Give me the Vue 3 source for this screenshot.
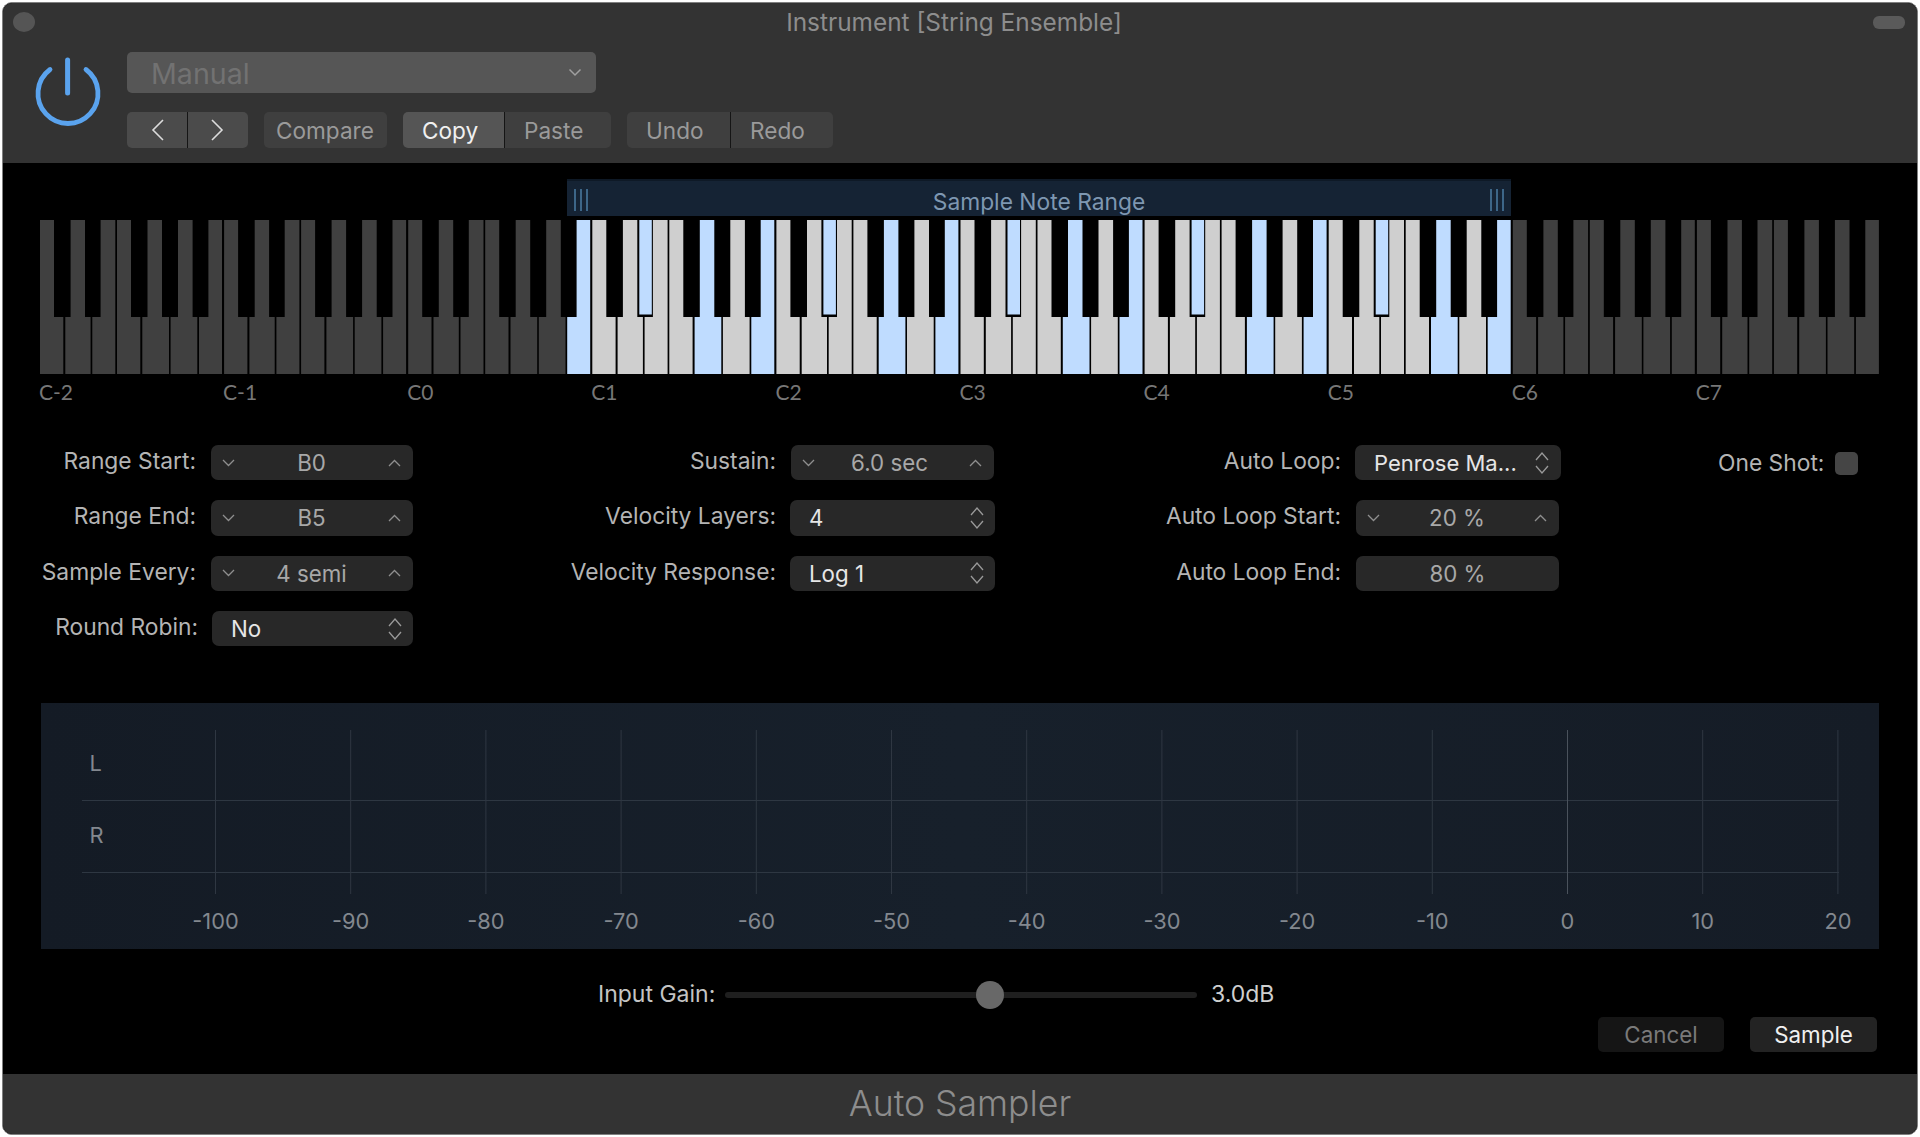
<script setup>
const OCT = 184.1
const bottoms = [[0,23.3],[25.3,50.6],[52.3,75.3],[77,100.3],[102.3,129],[130.6,157.3],[159,182]]
const tops = [[0,14],[30.6,45],[60.6,75.3],[77,91],[107.5,122],[138,152.6],[168.4,182]]
const whiteSemis = [0,2,4,5,7,9,11]
const blackX = { 3: 47, 8: 124.6, 1: 16.3, 6: 93.4, 10: 155 }
const TOP = 97, H = 154
const lo = 35, hi = 95
const sampled = n => n >= lo && n <= hi && (n - lo) % 4 === 0
const whites = []
const blues = []
for (let o = 0; o < 10; o++) {
  const x0 = o * OCT
  whiteSemis.forEach((s, i) => {
    const n = o * 12 + s
    const [a, b] = tops[i]
    const [c, d] = bottoms[i]
    const f = v => (x0 + v).toFixed(1)
    const inRange = n >= lo && n <= hi
    whites.push({
      d: `M${f(a)} 0H${f(b)}V${TOP}H${f(d)}V${H}H${f(c)}V${TOP}H${f(a)}Z`,
      fill: sampled(n) ? '#bfdcff' : inRange ? '#cfcfcf' : '#404040'
    })
  })
  ;[1,3,6,8,10].forEach(s => {
    const n = o * 12 + s
    if (sampled(n)) blues.push({ x: (x0 + blackX[s]).toFixed(1) })
  })
}
const octaves = ['C-2','C-1','C0','C1','C2','C3','C4','C5','C6','C7']
const ticks = [-100,-90,-80,-70,-60,-50,-40,-30,-20,-10,0,10,20].map((v, i) => ({ v, x: 174.5 + i * 135.2 }))
const col1 = [
  { label: 'Range Start:', kind: 'step', value: 'B0' },
  { label: 'Range End:', kind: 'step', value: 'B5' },
  { label: 'Sample Every:', kind: 'step', value: '4 semi' },
  { label: 'Round Robin:', kind: 'pop', value: 'No', cls: 'shift' }
]
const col2 = [
  { label: 'Sustain:', kind: 'step', value: '6.0 sec' },
  { label: 'Velocity Layers:', kind: 'pop', value: '4' },
  { label: 'Velocity Response:', kind: 'pop', value: 'Log 1' }
]
const col3 = [
  { label: 'Auto Loop:', kind: 'pop', value: 'Penrose Ma...' },
  { label: 'Auto Loop Start:', kind: 'step', value: '20 %' },
  { label: 'Auto Loop End:', kind: 'plain', value: '80 %' }
]
const columns = [
  { cls: 'c1', rows: col1 },
  { cls: 'c2', rows: col2 },
  { cls: 'c3', rows: col3 }
]
</script>

<template>
  <div class="window">
    <header class="head">
      <div class="titlebar">
        <span class="dot"></span>
        <span class="title">Instrument [String Ensemble]</span>
        <span class="pill"></span>
      </div>
      <div class="toolbar">
        <svg class="power" width="75" height="73" viewBox="30 55 75 73" fill="none" stroke="#5aa3ee" stroke-linecap="round">
          <path d="M50 69.5A30 30 0 1 0 86 69.5" stroke-width="4.8"/>
          <path d="M67.6 60V93" stroke-width="5"/>
        </svg>
        <div class="tools">
          <div class="preset">
            <span class="presettext">Manual</span>
            <svg width="14" height="9" viewBox="0 0 14 9" fill="none" stroke="#a0a0a0" stroke-width="1.5"><path d="M1.5 1.5L7 7L12.5 1.5"/></svg>
          </div>
          <div class="btnrow">
            <div class="group nav">
              <div class="seg navseg prev"><svg width="14" height="22" viewBox="0 0 14 22" fill="none" stroke="#dcdcdc" stroke-width="1.6"><path d="M12 1L2 11L12 21"/></svg></div>
              <div class="seg navseg next"><svg width="14" height="22" viewBox="0 0 14 22" fill="none" stroke="#dcdcdc" stroke-width="1.6"><path d="M2 1L12 11L2 21"/></svg></div>
            </div>
            <div class="group compare"><div class="seg">Compare</div></div>
            <div class="group copygroup">
              <div class="seg copy">Copy</div>
              <div class="seg paste">Paste</div>
            </div>
            <div class="group undogroup">
              <div class="seg undo">Undo</div>
              <div class="seg redo">Redo</div>
            </div>
          </div>
        </div>
      </div>
    </header>

    <main class="body">
      <div class="rangebar">
        <span class="grip"><i></i><i></i><i></i></span>
        <span class="rangetext">Sample Note Range</span>
        <span class="grip"><i></i><i></i><i></i></span>
      </div>
      <svg class="keys" width="1842" height="154" viewBox="0 0 1842 154">
        <path v-for="(k, i) in whites" :key="i" :d="k.d" :fill="k.fill"/>
        <rect v-for="(b, i) in blues" :key="'b' + i" :x="b.x" y="0" width="12.5" height="94.5" fill="#bfdcff"/>
      </svg>
      <div class="octaves">
        <span v-for="o in octaves" :key="o">{{ o }}</span>
      </div>

      <section class="controls">
        <div v-for="col in columns" :key="col.cls" class="col" :class="col.cls">
          <div v-for="r in col.rows" :key="r.label" class="field" :class="r.cls">
            <span class="lab">{{ r.label }}</span>
            <div v-if="r.kind === 'step'" class="ctl step">
              <svg width="13" height="8" viewBox="0 0 13 8" fill="none" stroke="#8f8f8f" stroke-width="1.3"><path d="M1 1L6.5 6.5L12 1"/></svg>
              <span>{{ r.value }}</span>
              <svg width="13" height="8" viewBox="0 0 13 8" fill="none" stroke="#8f8f8f" stroke-width="1.3"><path d="M1 7L6.5 1.5L12 7"/></svg>
            </div>
            <div v-else-if="r.kind === 'pop'" class="ctl pop">
              <span>{{ r.value }}</span>
              <svg width="14" height="24" viewBox="0 0 14 24" fill="none" stroke="#9a9a9a" stroke-width="1.3"><path d="M1 9L7 2L13 9M1 15L7 22L13 15"/></svg>
            </div>
            <div v-else class="ctl plain"><span>{{ r.value }}</span></div>
          </div>
        </div>
        <div class="oneshot">
          <span class="lab">One Shot:</span>
          <span class="check"></span>
        </div>
      </section>

      <svg class="meter" width="1838" height="246" viewBox="0 0 1838 246">
        <defs>
          <linearGradient id="mbg" x1="0" y1="0" x2="1" y2="0">
            <stop offset="0" stop-color="#141b25"/>
            <stop offset="0.5" stop-color="#17202b"/>
            <stop offset="1" stop-color="#151c26"/>
          </linearGradient>
        </defs>
        <rect width="1838" height="246" fill="url(#mbg)"/>
        <line x1="41" x2="1798" y1="97.5" y2="97.5" stroke="#2e3742"/>
        <line x1="41" x2="1798" y1="169.5" y2="169.5" stroke="#2e3742"/>
        <line v-for="t in ticks" :key="t.v" :x1="t.x" :x2="t.x" y1="27" y2="191" :stroke="t.v === 0 ? '#4a525c' : '#2f3742'"/>
        <text x="48.5" y="68" class="mlabel">L</text>
        <text x="48.5" y="140" class="mlabel">R</text>
        <text v-for="t in ticks" :key="'t' + t.v" :x="t.x" y="226" text-anchor="middle" class="mlabel">{{ t.v }}</text>
      </svg>

      <div class="gain">
        <span class="gainlabel">Input Gain:</span>
        <div class="track"><span class="thumb"></span></div>
        <span class="gainval">3.0dB</span>
      </div>
      <div class="actions">
        <div class="act cancel">Cancel</div>
        <div class="act sample">Sample</div>
      </div>
    </main>

    <footer class="foot">Auto Sampler</footer>
  </div>
</template>

<style>
html, body { margin: 0; background: #fff; }
</style>

<style scoped>
.window {
  box-sizing: border-box;
  width: 1916px;
  height: 1133px;
  margin: 2px 0 0 2px;
  border: 1px solid #808080;
  border-radius: 10px;
  overflow: hidden;
  background: #000;
  font-family: Inter, "Liberation Sans", sans-serif;
  display: flex;
  flex-direction: column;
}
.head { height: 160px; background: #333; flex: none; }
.titlebar {
  height: 38px;
  display: grid;
  grid-template-columns: 1fr auto 1fr;
  align-items: center;
  padding: 0 12px 0 10px;
}
.dot { width: 22px; height: 20px; border-radius: 50%; background: #555; }
.title { color: #8d8d8d; font-size: 24.4px; padding-right: 10px; }
.pill { justify-self: end; width: 32px; height: 13px; border-radius: 6px; background: #5a5a5a; }
.toolbar { display: flex; padding-left: 27px; }
.power { margin-top: 14px; flex: none; }
.tools { margin-left: 22px; padding-top: 11px; }
.preset {
  box-sizing: border-box;
  width: 469px;
  height: 41px;
  background: #565656;
  border-radius: 5px;
  display: flex;
  align-items: center;
  justify-content: space-between;
  padding: 0 14px 0 24px;
  color: #727272;
  font-size: 28.6px;
}
.presettext { padding-top: 2px; }
.btnrow { display: flex; gap: 16px; margin-top: 19px; height: 36px; font-size: 22.6px; }
.group { display: flex; border-radius: 5px; overflow: hidden; }
.seg {
  box-sizing: border-box;
  height: 36px;
  display: flex;
  align-items: center;
  background: #3f3f3f;
  color: #9a9a9a;
  padding-left: 19px;
}
.seg + .seg { border-left: 1px solid #151515; }
.navseg { width: 60px; background: #4b4b4b; padding-left: 0; justify-content: center; }
.nav .seg + .seg { width: 61px; }
.prev svg { margin-left: 2px; }
.next svg { margin-right: 2px; }
.compare .seg { width: 123px; padding-left: 12px; }
.copy { width: 101px; background: #555; color: #f0f0f0; }
.paste { width: 107px; padding-left: 19px; }
.undo { width: 103px; }
.redo { width: 103px; }

.body { flex: 1; display: flex; flex-direction: column; }
.rangebar {
  box-sizing: border-box;
  margin: 16px 0 0 564px;
  width: 944px;
  height: 37px;
  background: #152334;
  border-top: 2px solid #0e1926;
  display: flex;
  align-items: center;
  justify-content: space-between;
  padding: 0 7px;
}
.rangetext { color: #7e97b1; font-size: 22.8px; padding-top: 5px; }
.grip { display: flex; gap: 4px; height: 22px; margin-top: 2px; }
.grip i { display: block; width: 2px; background: #3d6688; }
.keys { display: block; margin: 4px 0 0 37px; }
.octaves {
  margin: 4px 0 0 36px;
  height: 26px;
  display: grid;
  grid-template-columns: repeat(10, 184.1px);
  align-items: center;
  color: #777;
  font-family: Lato, "Liberation Sans", sans-serif;
  font-size: 21px;
}
.controls { display: flex; margin-top: 41px; height: 202px; }
.col { display: flex; flex-direction: column; gap: 20px; }
.field { display: flex; height: 35.3px; gap: 15px; }
.lab {
  color: #b4b4b4;
  font-size: 22.8px;
  text-align: right;
  line-height: 31px;
  white-space: nowrap;
}
.c1 .lab { width: 193px; }
.c2 { margin-left: 143px; }
.c2 .lab { width: 220px; }
.c2 .field { gap: 14px; }
.c2 .step span { margin-right: 5px; }
.c3 { margin-left: 145px; }
.c3 .lab { width: 201px; }
.c3 .field { gap: 14px; }
.shift { gap: 13px; }
.shift .lab { width: 195px; }
.shift .ctl { margin-left: 1px; }
.ctl {
  box-sizing: border-box;
  background: #282828;
  border-radius: 7px;
  display: flex;
  align-items: center;
  font-size: 22.3px;
}
.c1 .ctl { width: 202px; }
.c1 .shift .ctl { width: 201px; }
.c2 .ctl { width: 205px; }
.c3 .ctl { width: 206px; }
.step, .plain { color: #a8a8a8; }
.step { justify-content: space-between; padding: 0 12px 0 11px; }
.c2 .step, .c3 .step { width: 203px; margin-left: 1px; }
.plain { justify-content: center; }
.c3 .plain { width: 203px; margin-left: 1px; }
.pop { justify-content: space-between; color: #e6e6e6; padding: 0 11px 0 19px; }
.c3 .pop { padding: 0 12px 0 19px; font-size: 22px; }
.oneshot { display: flex; margin-left: 157px; align-items: flex-start; gap: 11px; }
.oneshot .lab { line-height: 35px; }
.check { width: 23px; height: 23px; margin-top: 7px; border-radius: 5px; background: #454545; }
.meter { display: block; margin: 56px 0 0 38px; }
.mlabel { fill: #83888f; font-size: 21.8px; font-family: Inter, "Liberation Sans", sans-serif; }
.gain { display: flex; align-items: center; height: 30px; margin-top: 30px; padding-left: 595px; font-size: 23px; }
.gainlabel { color: #c4c4c4; width: 127px; }
.track { position: relative; width: 472px; height: 6px; border-radius: 3px; background: #1f1f1f; top: 1px; }
.thumb {
  position: absolute;
  left: 251px;
  top: -11px;
  width: 28px;
  height: 28px;
  border-radius: 50%;
  background: #686868;
}
.gainval { color: #cfcfcf; margin-left: 14px; }
.actions { display: flex; justify-content: flex-end; gap: 26px; margin-top: 8px; padding-right: 40px; }
.act {
  width: 126px;
  height: 35px;
  border-radius: 5px;
  display: flex;
  align-items: center;
  justify-content: center;
  font-size: 22.4px;
}
.cancel { background: #151515; color: #7a7a7a; }
.sample { background: #232323; color: #f0f0f0; width: 127px; }
.foot {
  flex: none;
  height: 60px;
  background: #333;
  color: #8d8d8d;
  font-size: 35.6px;
  font-weight: 300;
  display: flex;
  align-items: center;
  justify-content: center;
  padding-bottom: 2px;
  box-sizing: border-box;
}
</style>
